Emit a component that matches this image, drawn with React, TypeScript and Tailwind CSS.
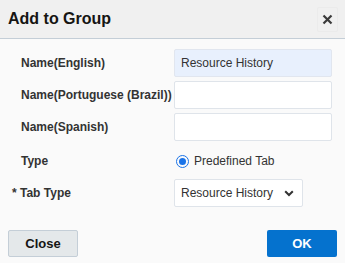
export default function App() {
  const labels = ["Name(English)", "Name(Portuguese (Brazil))", "Name(Spanish)"];
  return (
    <div
      className="w-[345px] h-[263px] flex flex-col bg-[#fafafa] text-[#333]"
      style={{ fontFamily: '"Liberation Sans", Arial, sans-serif' }}
    >
      <div className="h-[39px] shrink-0 flex items-center justify-between pl-[8px] pr-[7px] bg-[#f0f0f0] border-b border-[#c4ced7]">
        <h1 className="text-[16px] font-bold text-[#161513]">Add to Group</h1>
        <button className="w-[21px] h-[25px] flex items-center justify-center border border-[#ebebeb] rounded-[2px] text-[#333]">
          <svg width="11" height="11" viewBox="0 0 11 11">
            <path d="M1.5 1.5 L9.5 9.5 M9.5 1.5 L1.5 9.5" stroke="#3a3a3a" strokeWidth="2.2" />
          </svg>
        </button>
      </div>

      <div className="flex flex-col pt-[10px]">
        {labels.map((l, i) => (
          <div key={l} className="flex items-center h-[28px] mb-[4px]">
            <span className="w-[174px] pl-[21px] text-[12px] font-bold">{l}</span>
            <div
              className={
                "w-[158px] h-[28px] border rounded-[2px] flex items-center pl-[6px] text-[12px] " +
                (i === 0 ? "bg-[#e8f0fd] border-[#e1e6ef]" : "bg-white border-[#dfe4ea]")
              }
            >
              {i === 0 ? "Resource History" : ""}
            </div>
          </div>
        ))}
        <div className="flex items-center h-[28px] mt-[2px] mb-[4px]">
          <span className="w-[174px] pl-[21px] text-[12px] font-bold">Type</span>
          <div className="flex items-center gap-[5px] pl-[2px] text-[12px]">
            <span className="w-[13px] h-[13px] rounded-full border-[1.5px] border-[#1a73e8] flex items-center justify-center">
              <span className="w-[7px] h-[7px] rounded-full bg-[#1a73e8]" />
            </span>
            Predefined Tab
          </div>
        </div>
        <div className="flex items-center h-[28px]">
          <span className="w-[174px] pl-[12px] text-[12px] font-bold">* Tab Type</span>
          <div className="w-[129px] h-[28px] bg-white border border-[#dfe4ea] rounded-[2px] flex items-center justify-between pl-[6px] pr-[8px] text-[12px]">
            Resource History
            <svg width="10" height="7" viewBox="0 0 10 7">
              <path d="M1.2 1.2 L5 5 L8.8 1.2" stroke="#333" strokeWidth="2" fill="none" />
            </svg>
          </div>
        </div>
      </div>

      <div className="flex justify-between px-[8px] mt-[23px]">
        <button className="w-[70px] h-[27px] rounded-[2px] border border-[#c4ced7] bg-[#e4e8ea] text-[13px] font-bold text-[#161513]">
          Close
        </button>
        <button className="w-[70px] h-[27px] rounded-[2px] bg-[#0572ce] text-[13px] font-bold text-white">
          OK
        </button>
      </div>
    </div>
  );
}
